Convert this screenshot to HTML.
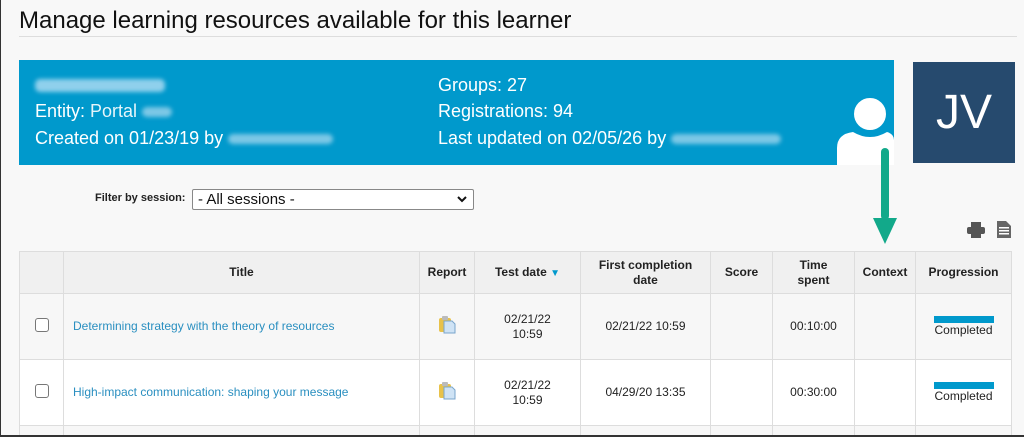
<!DOCTYPE html>
<html><head><style>
*{margin:0;padding:0;box-sizing:border-box}
html,body{width:1024px;height:437px;overflow:hidden}
body{background:#f8f8f8;font-family:"Liberation Sans",sans-serif;position:relative}
.wrap{position:absolute;left:0;top:0;width:1024px;height:437px;overflow:hidden;border-left:1px solid #333;border-bottom:2px solid #333}
.a{position:absolute}
h1{position:absolute;left:18px;top:7px;font-size:24px;font-weight:normal;color:#111;letter-spacing:0px}
.hl{left:18px;top:36px;width:998px;height:1px;background:#ddd}
.ban{left:18px;top:60px;width:875px;height:105px;background:#0099cc;color:#fff;font-size:18px}
.ban div{position:absolute;white-space:nowrap}
.blur{display:inline-block;background:#7cc8e6;height:10px;border-radius:5px;filter:blur(2px);vertical-align:middle}
.av{left:912px;top:62px;width:102px;height:101px;background:#264a6e;color:#fff;font-size:48px;text-align:center;line-height:101px}
table{position:absolute;left:18px;top:251px;border-collapse:collapse;font-size:12px;color:#222}
td,th{border:1px solid #ddd;text-align:center;vertical-align:middle}
th{background:#f0f0f0;height:42px;font-weight:bold;font-size:12px;line-height:15px}
td{height:66px;line-height:15px}
tr.r1 td{background:#f7f7f7}
tr.r2 td{background:#fff}
tr.r3 td{height:9px;background:#f7f7f7;border-bottom:none}
.t{text-align:left;padding-left:9px;color:#2a8fc0}
.cb{display:inline-block;width:14px;height:14px;border:1.5px solid #777;border-radius:3px;background:#fff}
.bar{display:block;margin:0 auto;width:60px;height:7px;background:#0099cc}
</style></head><body><div class="wrap">
<h1>Manage learning resources available for this learner</h1>
<div class="a hl"></div>
<div class="a ban">
<div style="left:16px;top:14px"><span class="blur" style="width:130px;height:13px;background:#8fd0ec"></span></div>
<div style="left:16px;top:41px">Entity: <span style="opacity:.9">Portal</span> <span class="blur" style="width:30px"></span></div>
<div style="left:16px;top:68px">Created on 01/23/19 by <span class="blur" style="width:105px"></span></div>
<div style="left:419px;top:15px">Groups: 27</div>
<div style="left:419px;top:41px">Registrations: 94</div>
<div style="left:419px;top:68px">Last updated on 02/05/26 by <span class="blur" style="width:110px"></span></div>
<svg style="position:absolute;left:814px;top:38px" width="61" height="67"><path d="M4 67 V50 Q4 36 20 34 Q37 44 54 34 Q61 36 61 42 V67Z" fill="#fff"/><circle cx="37" cy="16" r="17" fill="#fff" stroke="#0099cc" stroke-width="2"/></svg>
</div>
<div class="a av">JV</div>
<svg class="a" style="left:870px;top:148px" width="30" height="98"><rect x="10" y="0" width="8" height="72" rx="4" fill="#12a98a"/><path d="M2 70 H26 L14 96Z" fill="#12a98a"/></svg>
<div class="a" style="left:94px;top:192px;font-size:11px;font-weight:bold;color:#222">Filter by session:</div>
<div class="a" style="left:191px;top:189px;width:282px;height:21px;border:1px solid #888;border-radius:2px;background:#fff;font-size:15px;padding:1px 5px;color:#111">- All sessions -<svg style="position:absolute;right:6px;top:6px" width="10" height="7"><path d="M1 1L5 5L9 1" stroke="#111" stroke-width="2" fill="none"/></svg></div>
<svg class="a" style="left:966px;top:222px" width="18" height="16"><rect x="4" y="0" width="10" height="5" fill="#555"/><rect x="0" y="5" width="18" height="7" rx="2" fill="#555"/><rect x="4" y="10" width="10" height="6" fill="#555"/></svg>
<svg class="a" style="left:996px;top:221px" width="14" height="17"><path d="M0 0H9L14 5V17H0Z" fill="#666"/><g fill="#fff"><rect x="2" y="6" width="10" height="1.5"/><rect x="2" y="9" width="10" height="1.5"/><rect x="2" y="12" width="10" height="1.5"/></g></svg>
<table>
<tr><th style="width:44px"></th><th style="width:356px">Title</th><th style="width:55px">Report</th><th style="width:106px">Test date <span style="color:#0099cc;font-size:10px">▼</span></th><th style="width:130px">First completion<br>date</th><th style="width:62px">Score</th><th style="width:82px">Time<br>spent</th><th style="width:61px">Context</th><th style="width:96px">Progression</th></tr>
<tr class="r1"><td><span class="cb"></span></td><td class="t">Determining strategy with the theory of resources</td><td><svg width="18" height="18"><rect x="1" y="2" width="12" height="14" rx="2" fill="#e8c24a"/><rect x="4" y="0" width="6" height="4" rx="1" fill="#bbb"/><path d="M6 5H14L17 8V17H6Z" fill="#cfe3f5" stroke="#7aa6cc"/></svg></td><td>02/21/22<br>10:59</td><td>02/21/22 10:59</td><td></td><td>00:10:00</td><td></td><td><span class="bar"></span>Completed</td></tr>
<tr class="r2"><td><span class="cb"></span></td><td class="t">High-impact communication: shaping your message</td><td><svg width="18" height="18"><rect x="1" y="2" width="12" height="14" rx="2" fill="#e8c24a"/><rect x="4" y="0" width="6" height="4" rx="1" fill="#bbb"/><path d="M6 5H14L17 8V17H6Z" fill="#cfe3f5" stroke="#7aa6cc"/></svg></td><td>02/21/22<br>10:59</td><td>04/29/20 13:35</td><td></td><td>00:30:00</td><td></td><td><span class="bar"></span>Completed</td></tr>
<tr class="r3"><td></td><td></td><td></td><td></td><td></td><td></td><td></td><td></td><td></td></tr>
</table>
</div></body></html>
